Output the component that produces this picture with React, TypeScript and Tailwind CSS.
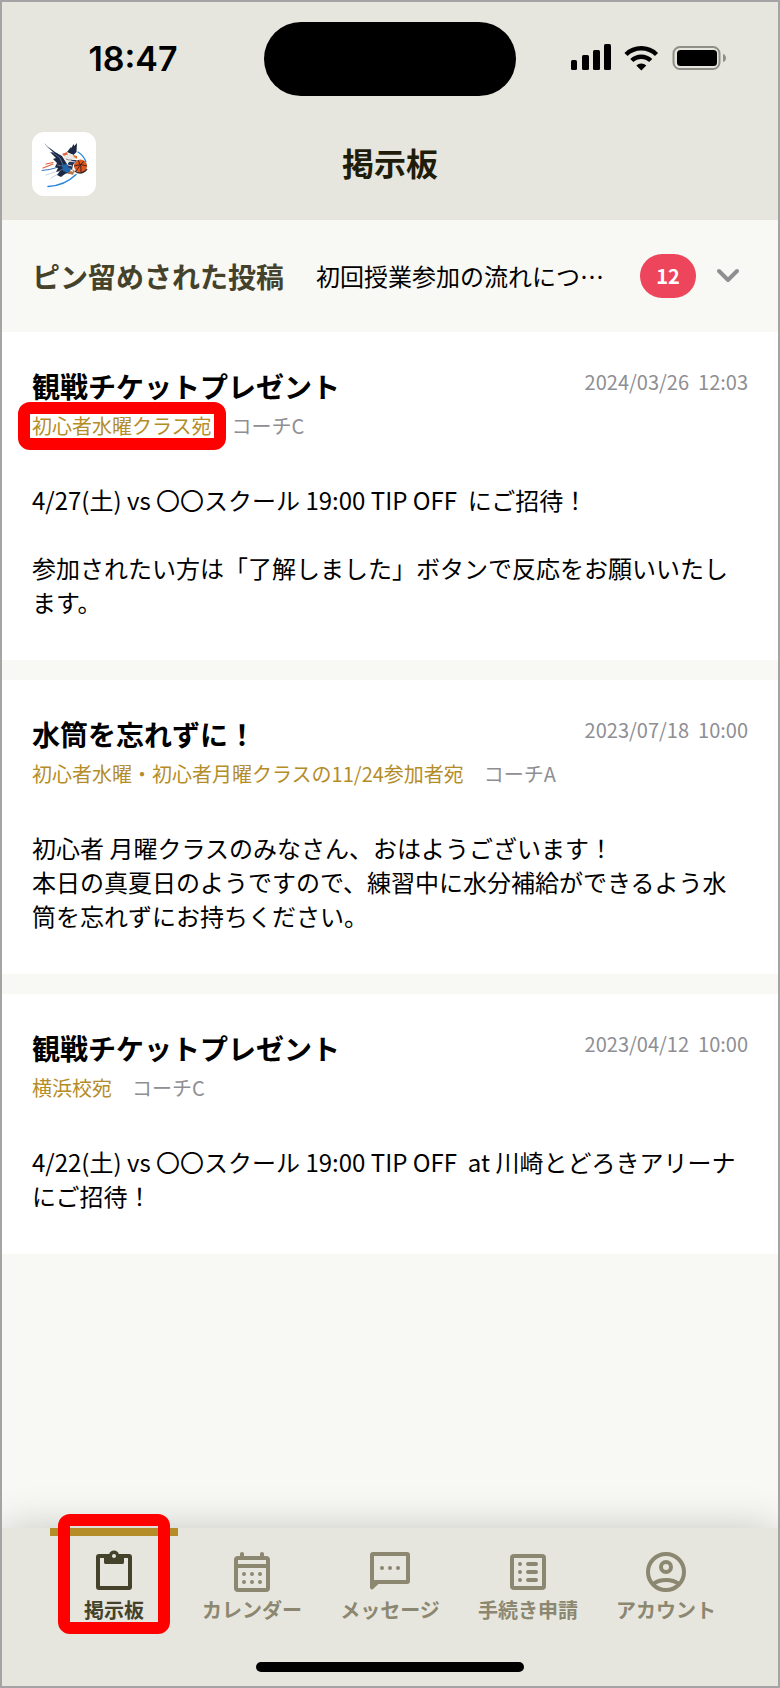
import React from 'react';

type Post = {
  id: string;
  title: string;
  date: string;
  target: string;
  author: string;
  body: string;
  highlighted?: boolean;
};

const posts: Post[] = [
  {
    id: 'p1',
    title: '観戦チケットプレゼント',
    date: '2024/03/26  12:03',
    target: '初心者水曜クラス宛',
    author: 'コーチC',
    body: '4/27(土) vs 〇〇スクール 19:00 TIP OFF  にご招待！\n\n参加されたい方は「了解しました」ボタンで反応をお願いいたします。',
    highlighted: true,
  },
  {
    id: 'p2',
    title: '水筒を忘れずに！',
    date: '2023/07/18  10:00',
    target: '初心者水曜・初心者月曜クラスの11/24参加者宛',
    author: 'コーチA',
    body: '初心者 月曜クラスのみなさん、おはようございます！\n本日の真夏日のようですので、練習中に水分補給ができるよう水筒を忘れずにお持ちください。',
  },
  {
    id: 'p3',
    title: '観戦チケットプレゼント',
    date: '2023/04/12  10:00',
    target: '横浜校宛',
    author: 'コーチC',
    body: '4/22(土) vs 〇〇スクール 19:00 TIP OFF  at 川崎とどろきアリーナにご招待！',
  },
];

const BoardIcon = () => (
  <svg className="size-12" viewBox="0 0 24 24" fill="currentColor" aria-hidden="true">
    <path
      fillRule="evenodd"
      d="M4.5 3h5.1a2.5 2.5 0 0 1 4.8 0h5.1A1.5 1.5 0 0 1 21 4.5v15a1.5 1.5 0 0 1-1.5 1.5h-15A1.5 1.5 0 0 1 3 19.5v-15A1.5 1.5 0 0 1 4.5 3ZM5 5v14h14V5h-2v2.3a.7.7 0 0 1-.7.7H7.7a.7.7 0 0 1-.7-.7V5H5Zm7-2a1 1 0 1 0 0 2 1 1 0 0 0 0-2Z"
    />
  </svg>
);

const CalendarIcon = () => (
  <svg className="size-12" viewBox="0 0 24 24" fill="none" stroke="currentColor" strokeWidth="2" aria-hidden="true">
    <rect x="4" y="5" width="16" height="16" rx="1" />
    <path d="M4 9h16" />
    <path d="M7 3v2M17 3v2" strokeLinecap="round" />
    <g fill="currentColor" stroke="none">
      <circle cx="8" cy="13" r="1" />
      <circle cx="12" cy="13" r="1" />
      <circle cx="16" cy="13" r="1" />
      <circle cx="8" cy="17" r="1" />
      <circle cx="12" cy="17" r="1" />
      <circle cx="16" cy="17" r="1" />
    </g>
  </svg>
);

const MessageIcon = () => (
  <svg className="size-12" viewBox="0 0 24 24" fill="currentColor" aria-hidden="true">
    <path
      fillRule="evenodd"
      d="M3.5 2h17A1.5 1.5 0 0 1 22 3.5v13a1.5 1.5 0 0 1-1.5 1.5H6.2l-2.5 2.4A1 1 0 0 1 2 19.7V3.500A1.500 1.500 0 0 1 3.500 2ZM4 4v12h16V4H4Z"
    />
    <circle cx="8" cy="10" r="1" />
    <circle cx="12" cy="10" r="1" />
    <circle cx="16" cy="10" r="1" />
  </svg>
);

const FormIcon = () => (
  <svg className="size-12" viewBox="0 0 24 24" fill="none" stroke="currentColor" strokeWidth="2" aria-hidden="true">
    <rect x="4" y="4" width="16" height="16" rx="1" />
    <path d="M12 8h4M12 12h4M12 16h4M8 8h0M8 12h0M8 16h0" strokeLinecap="round" />
  </svg>
);

const AccountIcon = () => (
  <svg className="size-12" viewBox="0 0 24 24" fill="none" stroke="currentColor" strokeWidth="2" aria-hidden="true">
    <circle cx="12" cy="12" r="9" />
    <circle cx="12" cy="9.5" r="2.5" />
    <path d="M5.500 18c1.700-1.300 4-2 6.500-2s4.800.7 6.500 2" />
  </svg>
);

const tabs = [
  { id: 'board', label: '掲示板', icon: BoardIcon, active: true },
  { id: 'calendar', label: 'カレンダー', icon: CalendarIcon },
  { id: 'message', label: 'メッセージ', icon: MessageIcon },
  { id: 'form', label: '手続き申請', icon: FormIcon },
  { id: 'account', label: 'アカウント', icon: AccountIcon },
];

const StatusBar = () => (
  <div className="grid grid-cols-[1fr_252px_1fr] pt-5 text-black">
    <span className="self-center justify-self-center font-['Inter',sans-serif] text-[34px] leading-10 font-semibold">
      18:47
    </span>
    <div className="h-[74px] rounded-full bg-black" />
    <div className="mr-[51px] flex items-center justify-self-end pb-1">
      <svg width="156" height="28" viewBox="0 0 156 28" aria-hidden="true">
        <rect x="0" y="17" width="6" height="10" rx="1.5" />
        <rect x="11" y="12" width="7" height="15" rx="1.5" />
        <rect x="22" y="7" width="7" height="20" rx="1.5" />
        <rect x="33" y="1" width="7" height="26" rx="1.5" />
        <g fill="none" stroke="#000">
          <path d="M55 11.500a22 22 0 0 1 30.500 0" strokeWidth="4.500" />
          <path d="M60.800 17.500a13.500 13.500 0 0 1 18.900 0" strokeWidth="4.500" />
        </g>
        <path d="M70.300 27.500l-5-5a7.300 7.300 0 0 1 10 0z" />
        <rect x="102.500" y="4" width="46" height="22" rx="6.500" fill="none" stroke="#8f8f8a" strokeWidth="2" />
        <rect x="106" y="7" width="40" height="16" rx="3.500" />
        <path d="M152 11c4 1 4 7 0 8z" fill="#8f8f8a" />
      </svg>
    </div>
  </div>
);

// Eagle carrying a basketball
const TeamLogo = () => (
  <svg className="size-16" viewBox="0 0 64 64" aria-hidden="true">
    <g fill="none" strokeLinecap="round">
      <path d="M16 54.500q17-1 28-12" stroke="#2a86dc" strokeWidth="1.500" />
      <path d="M10 38.500q8-.5 15-3" stroke="#3478bd" strokeWidth="1" />
      <path d="M11 36l10-4M14 32l7-1.500" stroke="#e2603e" strokeWidth="1.200" />
      <path d="M46 20q6 4 8 10" stroke="#2a86dc" strokeWidth="1.300" />
      <path d="M14 43l9-3M19 46l7-4" stroke="#c9d5e2" strokeWidth="1" />
      <path d="M13 12q3 5 8 7" stroke="#9fb6d0" strokeWidth="1" />
    </g>
    <path d="M15 14l8 6 7 4 5 8 3 8-5 2-4 3-4-2 3-4-4 1 2-4-3-1 2-4-4-4 3-1-6-6 4 1z" fill="#1c2842" />
    <path d="M20 20l8 6 3 7M25 33l5 1M27 39l4-2" fill="none" stroke="#536b91" strokeWidth="1" />
    <path d="M35 20l4-5 .5 1 2-4 .8 2 2.700-3-.5 9-3 3z" fill="#1c2842" />
    <path d="M30 33l5-1 4 6-3 3-5-2z" fill="#2467a8" />
    <path d="M30 22l5-2 1 3-4 1z" fill="#df6740" />
    <path d="M32 24l5-2 5 1 2 3-4 4-5 1-3-4z" fill="#e9e8e6" />
    <path d="M34 27l3 1 3 0" fill="none" stroke="#8c919b" strokeWidth="1" />
    <path d="M41 23l4 1 0 3-3-2z" fill="#e46c25" />
    <path d="M36 31l4-3 5 0-4 5-1 5-4-3z" fill="#25365a" />
    <path d="M37 29l6 1M36 33l4 1" fill="none" stroke="#d8dce4" strokeWidth="1" />
    <circle cx="48.500" cy="34" r="6.500" fill="#df571d" />
    <path d="M42 34q7-3 13 0M46 28q4 6 3 12M52 29q-4 4-8 10" fill="none" stroke="#48221a" strokeWidth="1" />
    <path d="M43 39q6 5 12-2" fill="none" stroke="#3a2a2c" strokeWidth="1.500" />
    <path d="M35 42l3-3 4 1-1 3-3-1zM40 37l3 2-1 2z" fill="#b77546" />
  </svg>
);

const PostCard = ({ post }: { post: Post }) => (
  <article className="bg-white px-[30px] pt-8 pb-[41px]">
    <div className="flex items-start justify-between gap-4">
      <h2 className="py-0.5 text-[28px] leading-10 font-bold">{post.title}</h2>
      <time className="shrink-0 text-xl leading-9 whitespace-pre text-[#8e8e93]">{post.date}</time>
    </div>
    <div className="flex gap-5 text-xl leading-9">
      <span className="relative text-[#b48d28]">
        {post.target}
        {post.highlighted && (
          <span className="pointer-events-none absolute -inset-x-3.5 -inset-y-1.5 rounded-xl border-12 border-[#ff0000]" />
        )}
      </span>
      <span className="text-[#8e8e93]">{post.author}</span>
    </div>
    <p className="mt-[39px] text-2xl leading-[34px] whitespace-pre-wrap">{post.body}</p>
  </article>
);

const App = () => {
  return (
    <div
      lang="ja"
      className="flex min-h-screen flex-col border-2 border-[#a5a3a4] bg-[#f8f8f4] font-['Noto_Sans_CJK_JP',sans-serif] text-black"
    >
      <header className="bg-[#e6e6de] pb-6">
        <StatusBar />
        <div className="mt-9 grid grid-cols-[64px_1fr_64px] items-center px-[30px]">
          <button aria-label="チーム" className="size-16 overflow-hidden rounded-xl bg-white">
            <TeamLogo />
          </button>
          <h1 className="pb-1 text-center text-[32px] leading-10 font-bold text-[#1f1d0a]">掲示板</h1>
        </div>
      </header>

      <main className="flex flex-col gap-5 pb-10">
        <div>
          <button className="flex w-full items-center px-[30px] py-[34px] text-left">
            <span className="shrink-0 text-[28px] leading-11 font-bold text-[#45422b]">ピン留めされた投稿</span>
            <span className="ml-8 min-w-0 flex-1 text-2xl leading-11 whitespace-nowrap">初回授業参加の流れにつ…</span>
            <span className="ml-5 flex h-11 w-14 items-center justify-center rounded-full bg-[#ed455c] text-xl font-bold text-white">
              12
            </span>
            <svg className="mr-2 ml-5 h-4 w-6" viewBox="0 0 24 16" fill="none" aria-hidden="true">
              <path d="M3 3l9 9 9-9" stroke="#8e8e93" strokeWidth="4" strokeLinecap="round" strokeLinejoin="round" />
            </svg>
          </button>
          <PostCard post={posts[0]} />
        </div>
        {posts.slice(1).map((post) => (
          <PostCard key={post.id} post={post} />
        ))}
      </main>

      <nav className="mt-auto bg-[#e6e6de] pb-3.5 shadow-[0_0_40px_rgba(0,0,0,0.2)] [clip-path:inset(-60px_0_0_0)]">
        <div className="flex px-[43px]">
          {tabs.map(({ id, label, icon: Icon, active }) => (
            <a
              key={id}
              href={`#${id}`}
              aria-current={active ? 'page' : undefined}
              className={
                active
                  ? 'relative flex flex-1 flex-col items-center text-[#45422b]'
                  : 'relative flex flex-1 flex-col items-center text-[#8c8770]'
              }
            >
              <span className={active ? 'mb-3 h-2 w-32 bg-[#b48d28]' : 'mb-3 h-2 w-32'} />
              <Icon />
              <span className="text-xl leading-7 font-bold">{label}</span>
              {active && (
                <span className="pointer-events-none absolute -top-3.5 h-[120px] w-28 rounded-xl border-12 border-[#ff0000]" />
              )}
            </a>
          ))}
        </div>
        <div className="mx-auto mt-[38px] h-2.5 w-[268px] rounded-full bg-black" />
      </nav>
    </div>
  );
};

export default App;
